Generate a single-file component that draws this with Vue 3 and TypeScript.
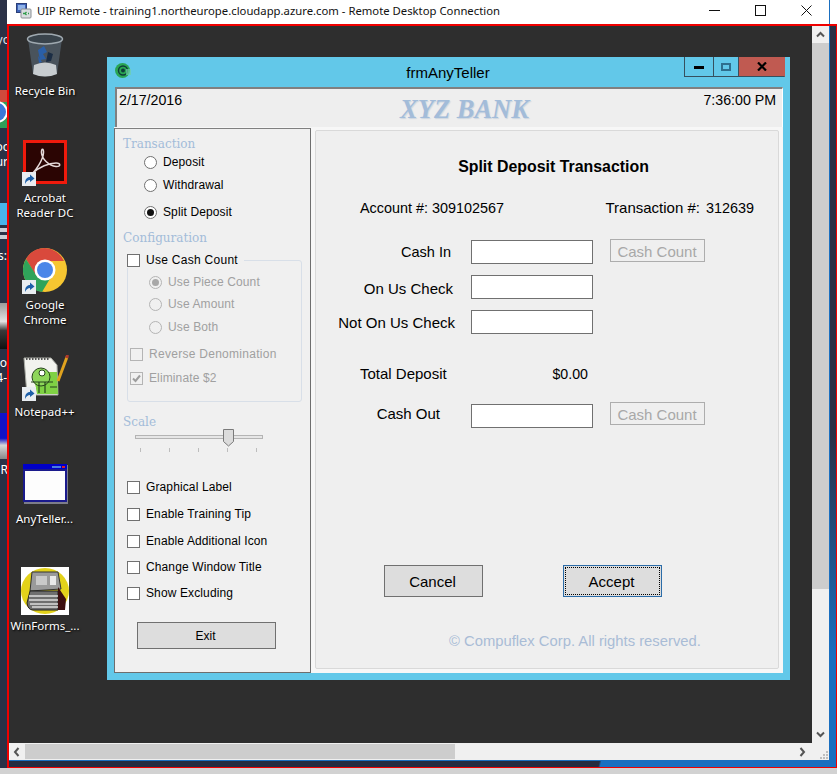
<script setup lang="ts">
interface Choice {
  label: string;
  on?: boolean;
}

const txnKinds: Choice[] = [
  { label: "Deposit" },
  { label: "Withdrawal" },
  { label: "Split Deposit", on: true },
];

const countModes: Choice[] = [
  { label: "Use Piece Count", on: true },
  { label: "Use Amount" },
  { label: "Use Both" },
];

const options = [
  "Graphical Label",
  "Enable Training Tip",
  "Enable Additional Icon",
  "Change Window Title",
  "Show Excluding",
];

const ticks = [0, 1, 2, 3, 4];
</script>

<template>
  <div class="screen">
    <div class="strip">
      <span class="peek peek-yo">yo</span>
      <svg class="peek-chrome" width="7" height="50" viewBox="0 0 7 50">
        <rect y="0" width="7" height="12" fill="#cf4a3c" />
        <rect y="12" width="7" height="26" fill="#2f9e58" />
        <circle cx="-3" cy="22" r="11" fill="#fff" />
        <circle cx="-3" cy="22" r="9" fill="#3c78d8" />
      </svg>
      <span class="peek peek-oo">oo</span>
      <span class="peek peek-ur">ur</span>
      <div class="peek-blue"></div>
      <span class="peek peek-es">es:</span>
      <div class="peek-photo"></div>
      <span class="peek peek-o">o</span>
      <span class="peek peek-4">4-</span>
      <div class="peek-app"></div>
      <span class="peek peek-r">R</span>
    </div>

    <div class="session">
      <header class="titlebar">
        <svg class="rdp-icon" width="16" height="16" viewBox="0 0 16 16">
          <rect x="0.5" y="0.5" width="10" height="9" fill="#3d63b8" stroke="#2b3f78" />
          <rect x="2" y="2" width="7" height="5" fill="#8fb2e8" />
          <rect x="5" y="6" width="10" height="9" rx="1" fill="#d9dde0" stroke="#8a8f94" />
          <path d="M7 10.5h2M10.5 9l-1.5 1.5 1.5 1.5M13 10.5h-1" stroke="#2e9b48" stroke-width="1.3" fill="none" />
        </svg>
        <span class="titlebar-text">UIP Remote - training1.northeurope.cloudapp.azure.com - Remote Desktop Connection</span>
        <div class="titlebar-controls">
          <svg width="11" height="11" viewBox="0 0 11 11"><path d="M0 5.5h11" stroke="#111" /></svg>
          <svg width="11" height="11" viewBox="0 0 11 11"><rect x="0.5" y="0.5" width="10" height="10" fill="none" stroke="#111" /></svg>
          <svg width="11" height="11" viewBox="0 0 11 11"><path d="M0.5 0.5l10 10M10.5 0.5l-10 10" stroke="#111" /></svg>
        </div>
      </header>

      <div class="frame">
        <div class="remote">
          <div class="view-row">
            <main class="desktop">
              <div class="desk-icon icon-bin">
                <svg width="38" height="46" viewBox="0 0 38 46">
                  <path d="M2 7 L7 42 Q19 47 31 42 L36 7 Z" fill="#4c5862" opacity="0.9" />
                  <path d="M8 33 Q19 28 30 33 L31 42 Q19 47 7 42 Z" fill="#c8cdd0" />
                  <ellipse cx="19" cy="7" rx="17.5" ry="5" fill="#39434b" stroke="#9fa9b0" stroke-width="1.5" />
                  <path d="M12 18 l6 -4 3 6 -4 2 3 5 -6 1 z" fill="#2a5fa8" />
                  <path d="M22 20 l5 2 -2 7 -5 1 z" fill="#1b2d44" />
                  <path d="M12 24 l4 6 -3 1 z" fill="#2a5fa8" />
                </svg>
                <span class="desk-label">Recycle Bin</span>
              </div>

              <div class="desk-icon icon-acrobat">
                <div class="tile-wrap">
                  <svg width="44" height="44" viewBox="0 0 44 44">
                    <rect x="1.5" y="1.5" width="41" height="41" fill="#2b0503" stroke="#f01a0c" stroke-width="3" />
                    <path d="M9 34 C13 30 20 20 20.5 13 C21 8 18 8 18.5 13 C19 19 26 26 33 26.5 C38 27 38 23 33 23 C26 23 16 27 10 33 C8 35 8 36 9 34 Z" fill="none" stroke="#e6dada" stroke-width="1.5" />
                  </svg>
                  <svg class="arrow-badge" width="14" height="14" viewBox="0 0 14 14">
                    <rect width="14" height="14" fill="#e8ecf0" />
                    <path d="M3 12 C3 7 5 5 8 5 V2.5 L12.5 6.5 L8 10 V8 C6 8 4.5 9 3 12 Z" fill="#1d5fa8" />
                  </svg>
                </div>
                <span class="desk-label">Acrobat<br />Reader DC</span>
              </div>

              <div class="desk-icon icon-chrome">
                <div class="tile-wrap">
                  <svg width="44" height="44" viewBox="0 0 44 44">
                    <circle cx="22" cy="22" r="22" fill="#f6c631" />
                    <path d="M22 0 A22 22 0 0 0 3 11 L12.5 27 L22 13 H41 A22 22 0 0 0 22 0 Z" fill="#d9493c" />
                    <path d="M3 11 A22 22 0 0 0 19 44 L28 29 L13 27 Z" fill="#2fa35a" />
                    <circle cx="22" cy="22" r="10.5" fill="#fff" />
                    <circle cx="22" cy="22" r="8" fill="#4a86e8" />
                  </svg>
                  <svg class="arrow-badge" width="14" height="14" viewBox="0 0 14 14">
                    <rect width="14" height="14" fill="#e8ecf0" />
                    <path d="M3 12 C3 7 5 5 8 5 V2.5 L12.5 6.5 L8 10 V8 C6 8 4.5 9 3 12 Z" fill="#1d5fa8" />
                  </svg>
                </div>
                <span class="desk-label">Google<br />Chrome</span>
              </div>

              <div class="desk-icon icon-notepad">
                <div class="tile-wrap">
                  <svg width="46" height="44" viewBox="0 0 46 44">
                    <path d="M1 3 H28 L34 10 L35 40 H4 Z" fill="#f2f3ee" stroke="#a9aba4" />
                    <path d="M3 4 H27" stroke="#555" stroke-dasharray="1.5 1.5" stroke-width="2" />
                    <path d="M10 17 H34 L35 39 H14 Z" fill="#7fd144" />
                    <ellipse cx="18" cy="22" rx="9" ry="9" fill="#8ed65a" stroke="#27451c" />
                    <circle cx="19" cy="18" r="3" fill="#fff" stroke="#27451c" />
                    <path d="M8 27 H30 M16 27 V38 M22 27 V38 M27 32 H34" stroke="#27451c" stroke-width="1.2" />
                    <path d="M35 26 L44 2" stroke="#e0a21e" stroke-width="3" />
                    <path d="M43.5 3 L44.7 0" stroke="#b03a2a" stroke-width="3" />
                  </svg>
                  <svg class="arrow-badge" width="14" height="14" viewBox="0 0 14 14">
                    <rect width="14" height="14" fill="#e8ecf0" />
                    <path d="M3 12 C3 7 5 5 8 5 V2.5 L12.5 6.5 L8 10 V8 C6 8 4.5 9 3 12 Z" fill="#1d5fa8" />
                  </svg>
                </div>
                <span class="desk-label">Notepad++</span>
              </div>

              <div class="desk-icon icon-teller">
                <svg width="45" height="40" viewBox="0 0 45 40">
                  <rect x="1" y="1" width="44" height="39" fill="#7d7d8a" />
                  <rect x="0" y="0" width="44" height="38" fill="#1a1a8c" />
                  <rect x="0" y="0" width="44" height="5" fill="#0000c8" />
                  <rect x="29" y="2" width="9" height="2" fill="#4a7de0" />
                  <rect x="39" y="2" width="3" height="2" fill="#d22" />
                  <rect x="2" y="7" width="40" height="29" fill="#fdfdfd" />
                </svg>
                <span class="desk-label">AnyTeller...</span>
              </div>

              <div class="desk-icon icon-winforms">
                <svg width="48" height="48" viewBox="0 0 48 48">
                  <rect width="48" height="48" fill="#fff" />
                  <ellipse cx="24" cy="24" rx="24" ry="23" fill="#e3d21a" />
                  <path d="M11 5 L37 5 L40 22 L9 24 Z" fill="#9a9a9a" stroke="#333" />
                  <rect x="15" y="9" width="11" height="9" fill="#c9c9c9" />
                  <rect x="29" y="9" width="6" height="9" fill="#eaeaea" />
                  <path d="M9 24 H37 V43 H12 Q7 43 6 36 Z" fill="#6f6f6f" stroke="#222" />
                  <path d="M8 29 H37 M8 33 H37 M9 37 H37 M11 40 H37" stroke="#ddd" stroke-width="1.5" />
                  <path d="M37 20 L45 32 L44 43 L37 43 Z" fill="#3d0f10" />
                </svg>
                <span class="desk-label">WinForms_...</span>
              </div>

              <section class="app-window">
                <div class="caption">
                  <svg class="app-logo" width="18" height="18" viewBox="0 0 18 18">
                    <circle cx="7.5" cy="8.5" r="7.5" fill="#2aa553" />
                    <circle cx="8" cy="8.5" r="4.5" fill="none" stroke="#0f3b3a" stroke-width="1.4" />
                    <circle cx="8" cy="8.5" r="2" fill="#0f3b3a" />
                    <path d="M11 7 H16 V13 H11 Z" fill="#6fd0a8" opacity="0.7" />
                  </svg>
                  <span class="caption-title">frmAnyTeller</span>
                  <div class="caption-btns">
                    <button class="cap-btn cap-min"><span></span></button>
                    <button class="cap-btn cap-max"><span></span></button>
                    <button class="cap-btn cap-close">
                      <svg width="10" height="9" viewBox="0 0 10 9"><path d="M1 0.5l8 8M9 0.5l-8 8" stroke="#000" stroke-width="2.2" /></svg>
                    </button>
                  </div>
                </div>

                <div class="status-panel">
                  <span>2/17/2016</span>
                  <span class="bank-name">XYZ BANK</span>
                  <span>7:36:00 PM</span>
                </div>

                <div class="work-area">
                  <aside class="left-panel">
                    <div class="legend legend-txn">Transaction</div>
                    <div
                      v-for="kind in txnKinds"
                      :key="kind.label"
                      class="choice txn-choice"
                    >
                      <span class="radio" :class="{ on: kind.on }"></span>
                      <span>{{ kind.label }}</span>
                    </div>

                    <div class="legend legend-config">Configuration</div>
                    <div class="group">
                      <div class="group-title choice">
                        <span class="check"></span>
                        <span class="wide-text">Use Cash Count</span>
                      </div>
                      <div
                        v-for="mode in countModes"
                        :key="mode.label"
                        class="choice mode-choice muted"
                      >
                        <span class="radio" :class="{ on: mode.on }"></span>
                        <span>{{ mode.label }}</span>
                      </div>
                      <div class="choice muted flag reverse">
                        <span class="check"></span>
                        <span class="wide-text">Reverse Denomination</span>
                      </div>
                      <div class="choice muted flag eliminate">
                        <span class="check">
                          <svg width="11" height="11" viewBox="0 0 11 11"><path d="M2 5.5l2.5 2.5L9 2.5" fill="none" stroke="#9d9d9d" stroke-width="2" /></svg>
                        </span>
                        <span>Eliminate $2</span>
                      </div>
                    </div>

                    <div class="legend legend-scale">Scale</div>
                    <div class="slider">
                      <div class="slider-track"></div>
                      <svg class="slider-thumb" width="11" height="18" viewBox="0 0 11 18">
                        <path d="M0.5 0.5 H10.5 V12.5 L5.5 17 L0.5 12.5 Z" fill="#dcdcdc" stroke="#7a7a7a" />
                      </svg>
                      <div class="slider-ticks">
                        <i v-for="t in ticks" :key="t"></i>
                      </div>
                    </div>

                    <div class="option-list">
                      <div v-for="opt in options" :key="opt" class="choice">
                        <span class="check"></span>
                        <span>{{ opt }}</span>
                      </div>
                    </div>

                    <button class="btn exit-btn">Exit</button>
                  </aside>

                  <section class="deposit-panel">
                    <h1 class="deposit-title">Split Deposit Transaction</h1>
                    <div class="ids">
                      <span>Account #: 309102567</span>
                      <span class="txn-id"><span class="txn-label">Transaction #:</span><span>312639</span></span>
                    </div>

                    <div class="form-row row-cash-in">
                      <label class="lbl lbl-cash-in">Cash In</label>
                      <input class="field" />
                      <button class="btn-count" disabled>Cash Count</button>
                    </div>
                    <div class="form-row row-next">
                      <label class="lbl lbl-on-us">On Us Check</label>
                      <input class="field" />
                    </div>
                    <div class="form-row row-next">
                      <label class="lbl">Not On Us Check</label>
                      <input class="field" />
                    </div>
                    <div class="form-row row-total">
                      <span class="lbl-total">Total Deposit</span>
                      <span class="amount">$0.00</span>
                    </div>
                    <div class="form-row row-out">
                      <label class="lbl lbl-cash-out">Cash Out</label>
                      <input class="field" />
                      <button class="btn-count" disabled>Cash Count</button>
                    </div>

                    <div class="actions">
                      <button class="btn act-btn">Cancel</button>
                      <button class="btn act-btn default-btn"><span>Accept</span></button>
                    </div>
                    <div class="copyright">© Compuflex Corp. All rights reserved.</div>
                  </section>
                </div>
              </section>
            </main>

            <div class="vscroll">
              <div class="sb-end">
                <svg width="9" height="7" viewBox="0 0 9 7"><path d="M1 5.5l3.5-3.5 3.5 3.5" fill="none" stroke="#555" stroke-width="2" /></svg>
              </div>
              <div class="vthumb"></div>
              <div class="vtrack"></div>
              <div class="sb-end">
                <svg width="9" height="7" viewBox="0 0 9 7"><path d="M1 1.5l3.5 3.5 3.5-3.5" fill="none" stroke="#555" stroke-width="2" /></svg>
              </div>
            </div>
          </div>

          <div class="hscroll">
            <svg class="h-left" width="7" height="10" viewBox="0 0 7 10"><path d="M5.5 1L2 5l3.5 4" fill="none" stroke="#555" stroke-width="2" /></svg>
            <div class="hthumb"></div>
            <svg class="h-right" width="7" height="10" viewBox="0 0 7 10"><path d="M1.5 1L5 5 1.5 9" fill="none" stroke="#555" stroke-width="2" /></svg>
            <svg class="grip" width="9" height="9" viewBox="0 0 9 9">
              <path d="M7 1h2v2H7zM4 4h2v2H4zM7 4h2v2H7zM1 7h2v2H1zM4 7h2v2H4zM7 7h2v2H7z" fill="#bdbdbd" />
            </svg>
          </div>
          <div class="taskbar"></div>
        </div>
        <div class="side-edge"></div>
      </div>
    </div>
  </div>
</template>

<style>
html,
body {
  margin: 0;
  background: #d2d2d2;
}
</style>

<style scoped>
.screen {
  position: relative;
  display: flex;
  width: 837px;
  height: 768px;
  font-family: "Liberation Sans", Arial, sans-serif;
  color: #000;
  overflow: hidden;
}

/* sliver of the local desktop left of the session window */
.strip {
  position: relative;
  flex: 0 0 7px;
  background: #2a3146;
  overflow: hidden;
}

.peek {
  position: absolute;
  right: 0;
  font: 12px/14px "Noto Sans", sans-serif;
  color: #fff;
  white-space: nowrap;
}

.peek-yo { top: 33px; right: -3px; color: #dfe4ee; }
.peek-oo { top: 140px; right: -3px; }
.peek-ur { top: 155px; right: -1px; }
.peek-es { top: 249px; }
.peek-o { top: 356px; }
.peek-4 { top: 371px; }
.peek-r { top: 463px; right: -1px; }

.peek-chrome {
  position: absolute;
  top: 90px;
  left: 0;
}

.peek-blue {
  position: absolute;
  top: 203px;
  left: 0;
  width: 7px;
  height: 36px;
  background: linear-gradient(#49b4ea 0 60%, #2a3146 60% 70%, #c9ced6 70% 80%, #2a3146 80% 88%, #c9ced6 88%);
}

.peek-photo {
  position: absolute;
  top: 303px;
  left: 0;
  width: 7px;
  height: 46px;
  background: linear-gradient(#9b9b9b, #e4e4e4 40%, #3a3a3a 60%, #111);
}

.peek-app {
  position: absolute;
  top: 413px;
  left: 0;
  width: 7px;
  height: 46px;
  background: linear-gradient(#1212c8 0 55%, #d8d8d8 70%, #888);
}

.session {
  flex: 1;
  display: flex;
  flex-direction: column;
  min-width: 0;
}

.titlebar {
  flex: 0 0 24px;
  display: flex;
  align-items: center;
  box-sizing: border-box;
  width: 823px;
  padding-left: 9px;
  background: #fff;
  border-right: 1px solid #1a6fc0;
  position: relative;
}

.titlebar::after {
  content: "";
  position: absolute;
  left: 823px;
  top: 0;
  width: 7px;
  height: 24px;
  background: #fff;
}

.rdp-icon {
  margin-right: 5px;
  margin-top: -2px;
}

.titlebar-text {
  font: 11.3px "Noto Sans", sans-serif;
  white-space: nowrap;
  color: #111;
  margin-top: -4px;
}

.titlebar-controls {
  display: flex;
  gap: 35px;
  margin-left: auto;
  margin-right: 17px;
  margin-top: -4px;
}

.frame {
  flex: 1;
  display: flex;
  min-height: 0;
  border: solid #f00000;
  border-width: 2px 1px 1px 2px;
}

.remote {
  flex: 0 0 820px;
  display: flex;
  flex-direction: column;
  min-height: 0;
}

.side-edge {
  flex: 1;
  border-left: 1px solid #1a6fc0;
  background: linear-gradient(#2a3146 0 55%, #1a6fc0 85%);
}

.view-row {
  flex: 1;
  display: flex;
  min-height: 0;
}

.desktop {
  position: relative;
  flex: 1;
  background: #2e2e2e;
}

.vscroll {
  flex: 0 0 17px;
  display: flex;
  flex-direction: column;
  background: #f0f0f0;
}

.sb-end {
  flex: 0 0 17px;
  display: flex;
  align-items: center;
  justify-content: center;
}

.vthumb {
  flex: 0 0 546px;
  background: #cdcdcd;
}

.vtrack {
  flex: 1;
}

.hscroll {
  position: relative;
  flex: 0 0 17px;
  display: flex;
  align-items: center;
  background: #f0f0f0;
}

.h-left {
  margin-left: 4px;
}

.hthumb {
  width: 430px;
  height: 15px;
  margin-left: 5px;
  background: #cdcdcd;
}

.h-right {
  margin-left: 344px;
}

.grip {
  position: absolute;
  right: 1px;
  bottom: 1px;
}

.taskbar {
  flex: 0 0 6px;
  border-top: 1px solid #1a6fc0;
  background: linear-gradient(104deg, #252c40 0 573px, #1a6fc0 575px);
}

/* desktop shortcuts */
.desk-icon {
  position: absolute;
  width: 76px;
  display: flex;
  flex-direction: column;
  align-items: center;
}

.icon-bin { left: -2px; top: 6px; }
.icon-acrobat { left: -2px; top: 114px; }
.icon-chrome { left: -2px; top: 222px; }
.icon-notepad { left: -1px; top: 329px; }
.icon-teller { left: -2px; top: 438px; }
.icon-winforms { left: -2px; top: 541px; }

.tile-wrap {
  position: relative;
  display: flex;
}

.arrow-badge {
  position: absolute;
  left: -1px;
  bottom: -2px;
}

.desk-label {
  margin-top: 4px;
  font: 11.5px/15px "Noto Sans", sans-serif;
  color: #fff;
  text-align: center;
  white-space: nowrap;
  text-shadow: 1px 1px 2px #000;
}

.icon-bin .desk-label { margin-top: 5px; }
.icon-acrobat .desk-label { margin-top: 6px; }
.icon-chrome .desk-label { margin-top: 5px; }
.icon-notepad .desk-label { margin: 5px 0 0 -3px; }
.icon-teller .desk-label { margin: 7px 0 0 -1px; }
.icon-winforms .desk-label { margin-top: 3px; }

/* the application window */
.app-window {
  position: absolute;
  left: 98px;
  top: 31px;
  width: 683px;
  height: 623px;
  background: #62c8e9;
}

.caption {
  position: relative;
  height: 30px;
  display: flex;
  justify-content: center;
  align-items: center;
}

.app-logo {
  position: absolute;
  left: 8px;
  top: 5px;
}

.caption-title {
  font-size: 15px;
  margin-left: -1px;
}

.caption-btns {
  position: absolute;
  top: 0;
  right: 5px;
  display: flex;
  height: 20px;
}

.cap-btn {
  box-sizing: border-box;
  height: 20px;
  margin: 0;
  padding: 0;
  display: flex;
  align-items: center;
  justify-content: center;
  background: #62c8e9;
  border: solid #36505e;
  border-width: 0 0 1px 1px;
}

.cap-min { width: 29px; }
.cap-max { width: 25px; }
.cap-close { width: 47px; background: #c05a51; border-right-width: 1px; border-right-color: #c05a51; }

.cap-min span {
  width: 10px;
  height: 3px;
  margin-top: 2px;
  background: #000;
}

.cap-max span {
  box-sizing: border-box;
  width: 10px;
  height: 8px;
  border: 2px solid #2f6f8e;
}

.status-panel {
  box-sizing: border-box;
  display: grid;
  grid-template-columns: 1fr auto 1fr;
  height: 40px;
  margin: 0 7px 0 8px;
  padding: 3px 6px 0 2px;
  background: #eeeeee;
  border-style: solid;
  border-color: #808080 #fff #eee #808080;
  border-width: 2px 1px 0 2px;
  font-size: 14.2px;
  line-height: 16px;
}

.status-panel span:last-child {
  justify-self: end;
}

.bank-name {
  font: italic bold 26.5px/27px "Liberation Serif", serif;
  color: #a3bcd9;
  margin: 4px 0 0 34px;
  text-shadow: 1px 1px 1px #cdd6e0;
}

.work-area {
  display: flex;
  height: 546px;
  margin: 0 7px 0 7px;
  background: #f7f7f7;
}

.left-panel {
  box-sizing: border-box;
  flex: 0 0 197px;
  height: 545px;
  margin-top: 1px;
  display: flex;
  flex-direction: column;
  align-items: flex-start;
  padding: 6px 0 0 0;
  background: #f0f0f0;
  border: 1px solid #6e6e6e;
  border-top-color: #808080;
  font-size: 12px;
}

.legend {
  font: 12px/16px "DejaVu Serif", serif;
  color: #a3bcd9;
  margin-left: 8px;
  padding-top: 1px;
  margin-bottom: -1px;
}

.legend-config { margin-top: 9px; }
.legend-scale { margin-top: 11px; }

.choice {
  display: flex;
  align-items: center;
  gap: 6px;
  height: 16px;
  white-space: nowrap;
  letter-spacing: 0.12px;
}

.wide-text {
  letter-spacing: 0.28px;
}

.muted {
  color: #a0a0a0;
}

.radio {
  box-sizing: border-box;
  flex: 0 0 13px;
  height: 13px;
  display: flex;
  align-items: center;
  justify-content: center;
  border-radius: 50%;
  background: #fff;
  border: 1px solid #707070;
}

.radio.on::after {
  content: "";
  width: 7px;
  height: 7px;
  border-radius: 50%;
  background: #111;
}

.muted .radio {
  background: #f0f0f0;
  border-color: #b4b4b4;
}

.muted .radio.on::after {
  background: #a8a8a8;
}

.check {
  box-sizing: border-box;
  flex: 0 0 13px;
  height: 13px;
  display: flex;
  align-items: center;
  justify-content: center;
  background: #fff;
  border: 1px solid #707070;
}

.muted .check {
  background: #f0f0f0;
  border-color: #b4b4b4;
}

.txn-choice {
  margin: 3px 0 0 29px;
}

.txn-choice:nth-of-type(3) { margin-top: 7px; }
.txn-choice:nth-of-type(4) { margin-top: 11px; }

.group {
  position: relative;
  box-sizing: border-box;
  width: 175px;
  height: 142px;
  margin: 15px 0 0 12px;
  padding: 13px 0 0 21px;
  border: 1px solid #d8dfe8;
  border-radius: 3px;
}

.group-title {
  position: absolute;
  left: -1px;
  top: -9px;
  padding-right: 6px;
  background: #f0f0f0;
}

.mode-choice + .mode-choice { margin-top: 6px; }
.mode-choice + .mode-choice + .mode-choice { margin-top: 7px; }

.flag {
  margin-left: -19px;
}

.reverse { margin-top: 11px; }
.eliminate { margin-top: 8px; }

.slider {
  position: relative;
  width: 128px;
  height: 26px;
  margin-left: 20px;
}

.slider-track {
  box-sizing: border-box;
  margin-top: 6px;
  height: 4px;
  background: #e6e6e6;
  border: 1px solid #b4b4b4;
}

.slider-thumb {
  position: absolute;
  left: 88px;
  top: 0;
}

.slider-ticks {
  display: flex;
  justify-content: space-between;
  margin: 9px 6px 0 5px;
}

.slider-ticks i {
  width: 1px;
  height: 4px;
  background: #bdbdbd;
}

.option-list {
  margin: 24px 0 0 12px;
  display: flex;
  flex-direction: column;
  gap: 11px;
}

.option-list .choice:nth-child(n + 4) {
  margin-top: -1px;
}

.btn {
  box-sizing: border-box;
  margin: 0;
  padding: 0;
  background: #dddddd;
  border: 1px solid #707070;
  font-family: "Liberation Sans", Arial, sans-serif;
  color: #000;
}

.exit-btn {
  width: 139px;
  height: 27px;
  margin: 21px 0 0 22px;
  padding-right: 2px;
  font-size: 12px;
}

.deposit-panel {
  box-sizing: border-box;
  flex: 0 0 464px;
  height: 539px;
  margin: 3px 0 0 4px;
  background: #efefef;
  border: 1px solid #d9d9d9;
  border-radius: 2px;
  font-size: 15px;
}

.deposit-title {
  margin: 27px 0 0 13px;
  font-size: 15.9px;
  line-height: 18px;
  font-weight: bold;
  text-align: center;
}

.ids {
  display: flex;
  justify-content: space-between;
  margin: 23px 24px 0 44px;
  font-size: 14.4px;
  line-height: 18px;
  white-space: nowrap;
}

.txn-id {
  display: flex;
  gap: 6px;
}

.txn-label {
  font-size: 15px;
}

.form-row {
  display: grid;
  grid-template-columns: 155px 122px 17px 95px;
  height: 24px;
  align-items: center;
  white-space: nowrap;
}

.row-cash-in { margin-top: 23px; }
.row-next { margin-top: 11px; }
.row-total { margin-top: 28px; }
.row-out { margin-top: 18px; }

.lbl {
  grid-column: 1;
  text-align: right;
  padding-right: 16px;
}

.lbl-cash-in { padding-right: 20px; font-size: 14.5px; }
.lbl-on-us { padding-right: 18px; margin-top: 2px; }
.lbl-cash-out { padding-right: 31px; margin-top: -5px; }

.lbl-total {
  padding-left: 44px;
  margin-top: -2px;
}

.amount {
  text-align: right;
  padding-right: 5px;
  font-size: 14.2px;
}

.field {
  box-sizing: border-box;
  grid-column: 2;
  width: 122px;
  height: 24px;
  margin: 0;
  padding: 0;
  background: #fff;
  border: 1px solid #707070;
  border-radius: 0;
}

.btn-count {
  grid-column: 4;
  box-sizing: border-box;
  width: 95px;
  height: 23px;
  margin: -3px 0 0 0;
  padding: 1px 1px 0 0;
  background: #efefef;
  border: 1px solid #adadad;
  color: #a8a8a8;
  font: 15px "Liberation Sans", Arial, sans-serif;
}

.row-out .btn-count {
  margin-top: -5px;
}

.actions {
  display: flex;
  gap: 80px;
  margin: 137px 0 0 68px;
}

.act-btn {
  width: 99px;
  height: 32px;
  font-size: 15px;
  padding-right: 2px;
}

.default-btn {
  display: flex;
  align-items: center;
  justify-content: center;
  border-color: #2b6ca8;
  padding: 1px;
}

.default-btn span {
  box-sizing: border-box;
  width: 100%;
  height: 100%;
  padding-right: 2px;
  display: flex;
  align-items: center;
  justify-content: center;
  border: 1px dotted #000;
}

.copyright {
  margin: 35px 0 0 133px;
  font-size: 14.8px;
  line-height: 18px;
  color: #a9bcd6;
  white-space: nowrap;
}
</style>
